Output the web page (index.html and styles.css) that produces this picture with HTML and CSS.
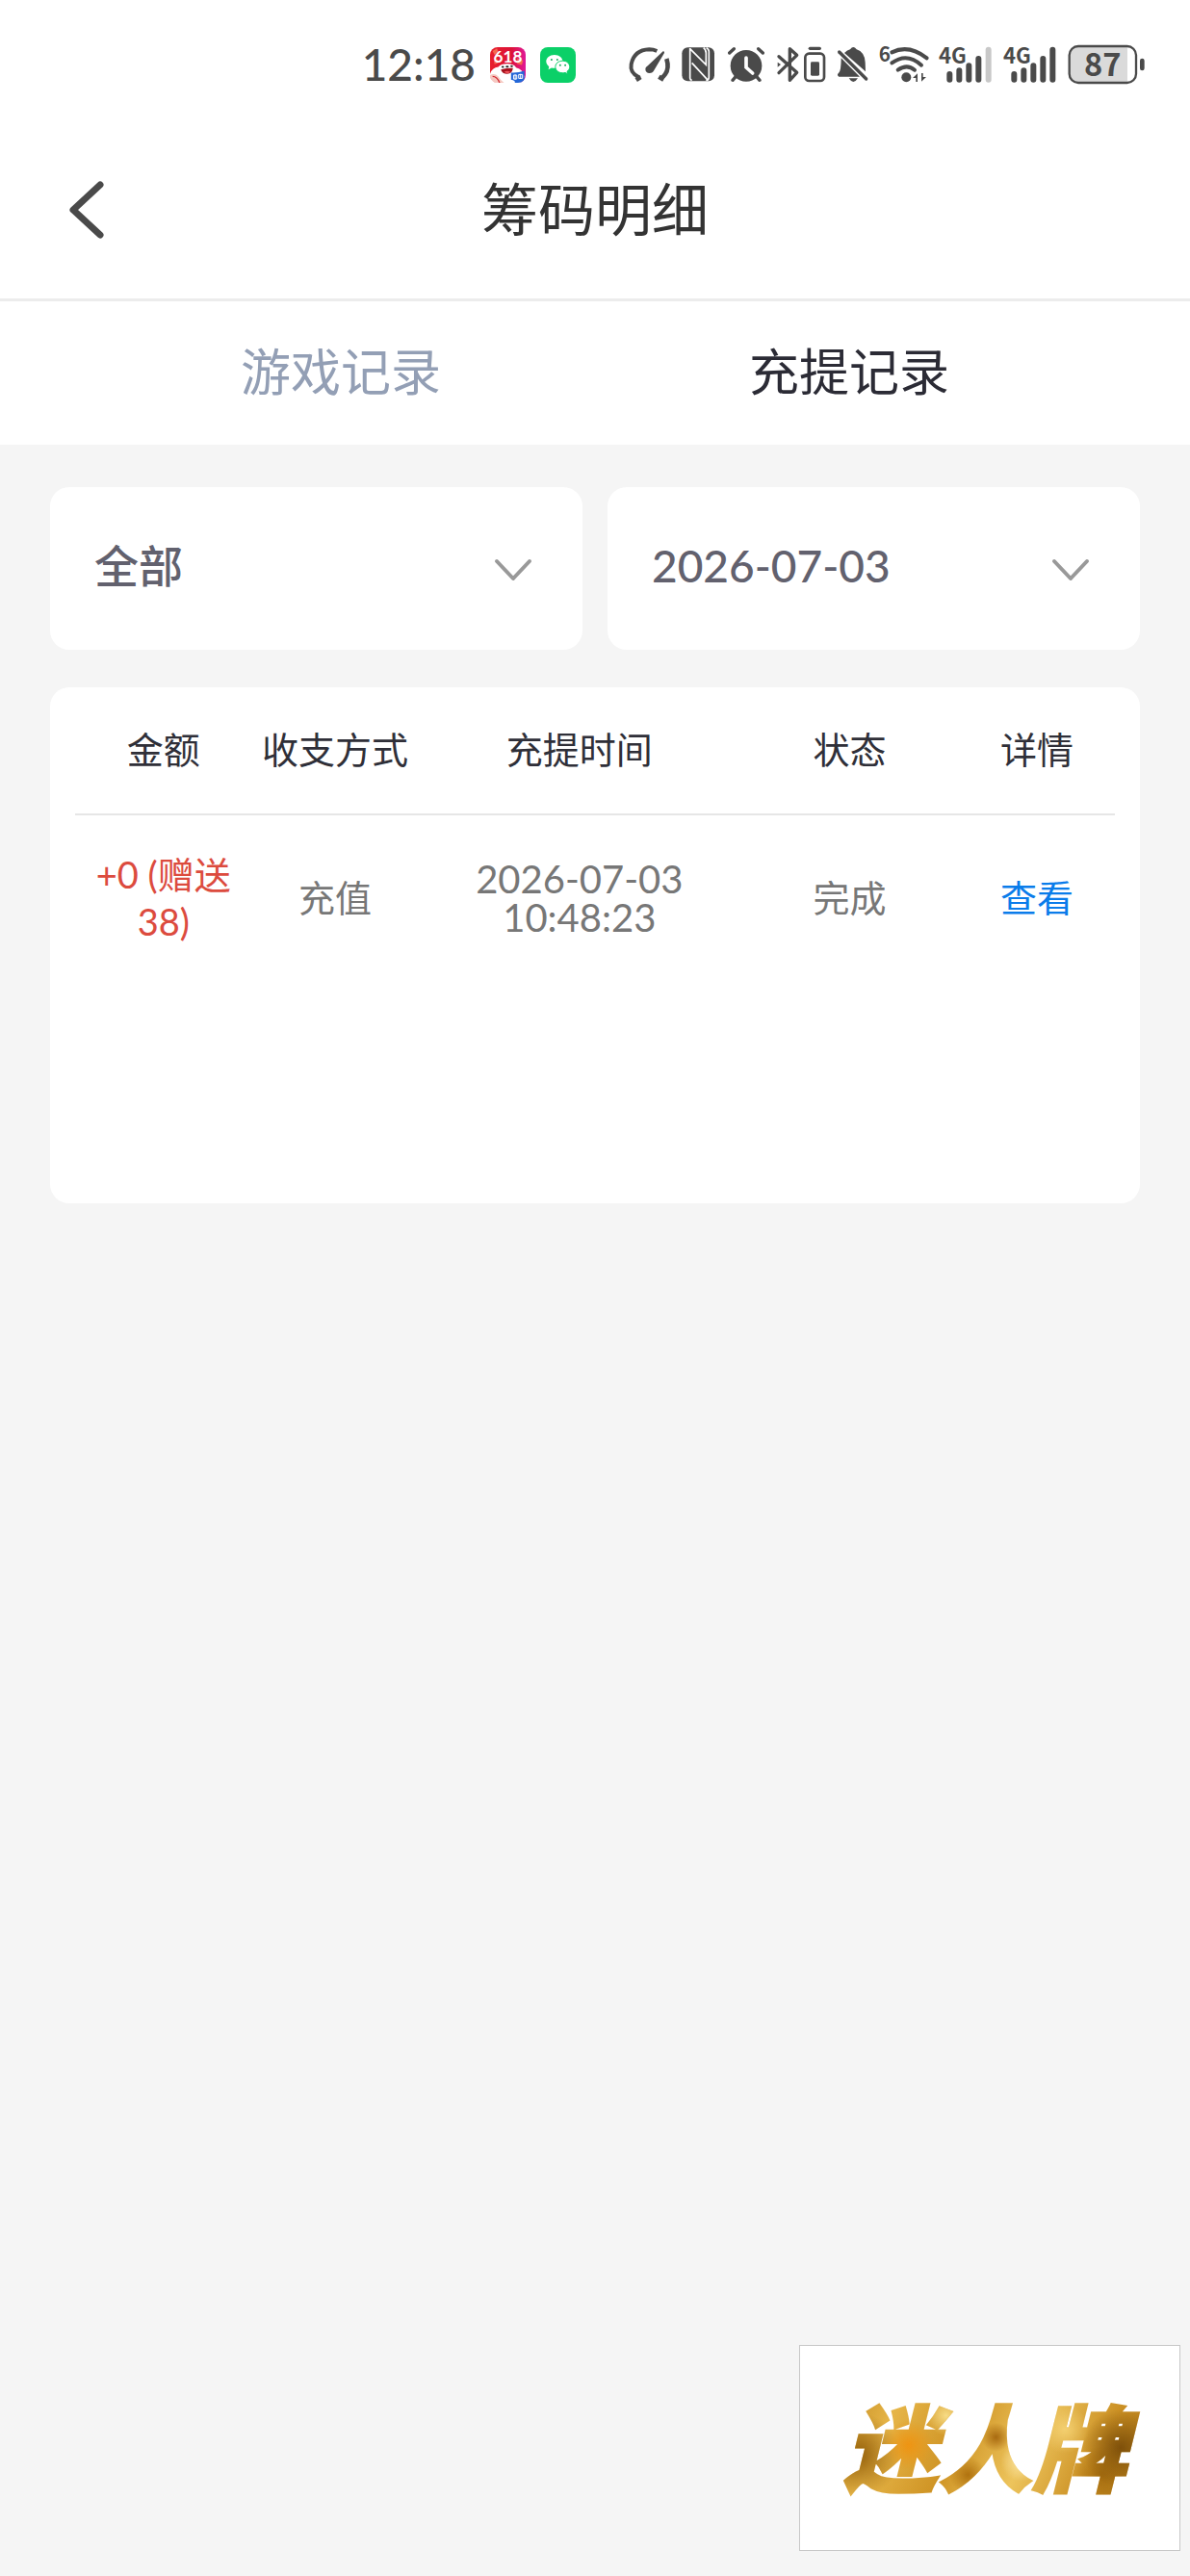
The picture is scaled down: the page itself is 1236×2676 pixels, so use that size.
FILE: index.html
```html
<!DOCTYPE html>
<html lang="zh-CN">
<head>
  <meta charset="UTF-8">
  <meta name="viewport" content="width=device-width, initial-scale=1.0">
  <title>筹码明细</title>
  <link rel="stylesheet" href="styles.css">
</head>
<body>
  <div class="status-bar">
    <div class="status-left">
      <span class="clock">12:18</span>
      <svg class="app-icon" viewBox="0 0 112 112" aria-hidden="true">
        <defs>
          <linearGradient id="promo" x1="0" y1="0" x2="1" y2="0">
            <stop offset="0" stop-color="#e8202c"/>
            <stop offset="0.6" stop-color="#dc1238"/>
            <stop offset="1" stop-color="#e01a9a"/>
          </linearGradient>
          <clipPath id="promoClip"><rect width="112" height="112" rx="24"/></clipPath>
        </defs>
        <g clip-path="url(#promoClip)">
          <rect width="112" height="112" fill="url(#promo)"/>
          <path d="M8 12l14-8 4 14-12 6zM86 34l18 8-4 14-16-4zM12 42l12-4 2 12-12 4z" fill="#f4694f"/>
          <path d="M0 84q6-20 26-22q8-10 28-10q22 0 28 12q22 6 26 28l-10 20H0z" fill="#fff"/>
          <path d="M0 88q14-8 26 4q6 10 18 20H0z" fill="#f6c9c1"/>
          <path d="M8 92q14 0 22 20" stroke="#d22b35" stroke-width="4" fill="none"/>
          <ellipse cx="40" cy="62" rx="4" ry="3" fill="#222"/>
          <ellipse cx="68" cy="60" rx="4" ry="3" fill="#222"/>
          <ellipse cx="54" cy="61" rx="5" ry="3" fill="#222"/>
          <path d="M34 70q20-5 38-4q-2 18-18 18q-16 0-20-14z" fill="#a5101c"/>
          <path d="M44 78q10-6 20 0q-9 8-20 0z" fill="#f0555c"/>
          <path d="M66 80q20 2 42-6v38H78q2-8-12-10z" fill="#2367d8"/>
          <path d="M74 88h10v12H74zM90 86h12v12H90zM79 86v16M96 84v16" fill="none" stroke="#fff" stroke-width="3"/>
        </g>
        <text x="56" y="48" text-anchor="middle" class="promo-text">618</text>
      </svg>
      <svg class="app-icon" viewBox="0 0 112 112" aria-hidden="true">
        <rect width="112" height="112" rx="24" fill="#0bd068"/>
        <path d="M45 24c-15 0-26 9-26 21 0 7 4 12 9 16l-2 9 10-5c3 1 6 1 9 1 15 0 26-9 26-21S60 24 45 24z" fill="#fff"/>
        <path d="M71 43c-13 0-23 8-23 19s10 19 23 19c3 0 5 0 8-1l8 4-2-8c5-3 8-8 8-14 0-11-9-19-22-19z" fill="#fff" stroke="#0bd068" stroke-width="3"/>
        <g fill="#10aa58">
          <circle cx="36" cy="39" r="3"/><circle cx="54" cy="39" r="3"/>
          <circle cx="63" cy="57" r="3"/><circle cx="79" cy="57" r="3"/>
        </g>
      </svg>
    </div>

    <div class="status-right">
      <!-- gauge -->
      <svg width="44" height="40" viewBox="33 52 132 120" aria-hidden="true">
        <path d="M66 159q4-8 4-8q-28-13-23-40q9-44 56-46q13 0 24 5" class="line w12 butt"/>
        <path d="M62 160l14-9M148 159l-15-9M157 94q9 30-4 48q-6 8-11 12" class="line w14 butt"/>
        <path d="M146 71q5-1 4 5l-32 54q-4 9-14 9q-13-1-13-13q0-6 9-12z" class="ink"/>
      </svg>
      <!-- nfc -->
      <svg width="36" height="40" viewBox="198 52 108 120" aria-hidden="true">
        <rect x="205" y="59" width="101" height="105" rx="18" class="ink"/>
        <path d="M230 61v94q0 5 6 6M230 63l50 50V76q0-10-8-16M286 161l-50-54M280 161q9 1 9-10V72q0-8-8-12" stroke="#fff" stroke-width="5" fill="none"/>
      </svg>
      <!-- alarm -->
      <svg width="40" height="40" viewBox="339 52 120 120" aria-hidden="true">
        <circle cx="405" cy="116" r="49" class="ink"/>
        <path d="M353 76l14-13M443 63l14 13M363 161l10-12M447 161l-10-12" class="line w10"/>
        <path d="M405 91v30l20 18" stroke="#fff" stroke-width="11" stroke-linecap="round" fill="none"/>
      </svg>
      <!-- bluetooth device battery -->
      <svg width="52" height="40" viewBox="492 52 156 120" aria-hidden="true">
        <path d="M507 87l56 50-22 24V63l22 20-56 55" class="line w10"/>
        <path d="M503 105l10 7-10 8z" class="ink"/>
        <rect x="589" y="78" width="59" height="85" rx="12" class="line w8"/>
        <rect x="606" y="104" width="27" height="43" rx="4" class="ink"/>
        <path d="M604 62h30" class="line w10"/>
      </svg>
      <!-- muted bell -->
      <svg width="34" height="40" viewBox="684 52 102 120" aria-hidden="true">
        <path d="M704 92l58 58h-65q-8-6-1-11q8-5 8-47zM714 76q9-9 18-11q10-14 20 0q25 8 27 40l1 29z" class="ink"/>
        <path d="M698 73l84 84" class="line w10"/>
        <path d="M728 155h28q-14 22-28 0z" class="ink"/>
      </svg>
      <!-- wifi 6 -->
      <svg width="52" height="40" viewBox="-24 52 156 120" aria-hidden="true">
        <text x="-22" y="103" class="wifi-text">6</text>
        <path d="M19 74q53-26 109 18" class="line w12"/>
        <path d="M19 107q47-34 92 7M38 129q28-20 52 0" class="line w12"/>
        <circle cx="64" cy="152" r="15" class="ink"/>
        <path d="M84 154l15-14v26h-5v-12zM126 151l-15 14v-26h5v12z" class="ink"/>
      </svg>
      <!-- signal, sim 1 -->
      <svg width="56" height="40" viewBox="165 52 168 120" aria-hidden="true">
        <text x="165" y="110" class="net-text">4G</text>
        <path d="M199 142v17M229 131v28M259 116v43M289 94v65" class="line w18"/>
        <path d="M320 66v93" class="line w18 faint"/>
      </svg>
      <!-- signal, sim 2 -->
      <svg width="56" height="40" viewBox="366 52 168 120" aria-hidden="true">
        <text x="366" y="110" class="net-text">4G</text>
        <path d="M400 142v17M430 131v28M460 116v43M490 94v65M520 66v93" class="line w18"/>
      </svg>
      <!-- phone battery -->
      <svg width="80" height="40" viewBox="567 52 240 120" aria-hidden="true">
        <path d="M600 56h153v112h-153q-26 0-26-26V82q0-26 26-26z" fill="#dadada"/>
        <rect x="572" y="55" width="208" height="114" rx="28" class="line w7"/>
        <path d="M799 100v24" class="line w14"/>
        <text x="676" y="149" text-anchor="middle" class="battery-text">87</text>
      </svg>
    </div>
  </div>

  <header class="header">
    <button class="back-btn" type="button" aria-label="返回">
      <svg width="36" height="60" viewBox="0 0 36 60">
        <path d="M32 4L4 30l28 26" fill="none" stroke="#4a4a4a" stroke-width="7" stroke-linecap="round" stroke-linejoin="round"/>
      </svg>
    </button>
    <h1>筹码明细</h1>
  </header>

  <nav class="tabs">
    <button type="button" class="tab">游戏记录</button>
    <button type="button" class="tab active">充提记录</button>
  </nav>

  <main class="content">
    <div class="filters">
      <div class="filter">
        <select aria-label="类型">
          <option>全部</option>
        </select>
        <svg class="chevron" width="40" height="24" viewBox="0 0 40 24"><path d="M3 3l17 18L37 3"/></svg>
      </div>
      <div class="filter">
        <select aria-label="日期">
          <option>2026-07-03</option>
        </select>
        <svg class="chevron" width="40" height="24" viewBox="0 0 40 24"><path d="M3 3l17 18L37 3"/></svg>
      </div>
    </div>

    <section class="records">
      <table>
        <colgroup>
          <col class="col-amount">
          <col class="col-type">
          <col class="col-time">
          <col class="col-state">
          <col class="col-detail">
        </colgroup>
        <thead>
          <tr>
            <th>金额</th>
            <th>收支方式</th>
            <th>充提时间</th>
            <th>状态</th>
            <th>详情</th>
          </tr>
        </thead>
        <tbody>
          <tr>
            <td class="amount">+0 (赠送38)</td>
            <td>充值</td>
            <td class="time">2026-07-03<br>10:48:23</td>
            <td>完成</td>
            <td><a href="#">查看</a></td>
          </tr>
        </tbody>
      </table>
    </section>
  </main>

  <div class="brand"><span>迷人牌</span></div>
</body>
</html>
```
FILE: styles.css
```css
* {
  box-sizing: border-box;
}
body {
  margin: 0;
  min-height: 100vh;
  background-color: #f5f5f5;
  color: #333;
  font-family: Lato, "Noto Sans CJK SC", sans-serif;
  font-size: 38px;
}
button,
select {
  font-family: inherit;
  border: none;
  background: none;
}
svg {
  overflow: visible;
}

/* status bar */
.status-bar {
  display: flex;
  justify-content: flex-end;
  align-items: center;
  gap: 53px;
  height: 134px;
  padding-right: 47px;
  background-color: #fff;
}
.status-left {
  display: flex;
  align-items: center;
  gap: 15px;
}
.status-right {
  display: flex;
  align-items: center;
  gap: 11px;
}
.clock {
  color: #4a4a4a;
  font-size: 46px;
  font-weight: 500;
  line-height: 48px;
}
.app-icon {
  width: 37px;
  height: 37px;
}
.ink {
  fill: #4a4a4a;
}
.line {
  fill: none;
  stroke: #4a4a4a;
  stroke-linecap: round;
  stroke-linejoin: round;
}
.w7 { stroke-width: 7px; }
.w8 { stroke-width: 8px; }
.w10 { stroke-width: 10px; }
.w12 { stroke-width: 12px; }
.w14 { stroke-width: 14px; }
.w18 { stroke-width: 18px; }
.butt {
  stroke-linecap: butt;
}
.faint {
  stroke: #c8c8c8;
}
.net-text,
.wifi-text,
.battery-text {
  fill: #4a4a4a;
  font-family: "Noto Sans CJK SC", sans-serif;
  font-weight: 700;
}
.net-text {
  font-size: 66px;
}
.wifi-text {
  font-size: 62px;
}
.battery-text {
  font-size: 98px;
}
.promo-text {
  fill: #fff;
  font-size: 52px;
  font-weight: 700;
}

/* header */
.header {
  display: grid;
  grid-template-columns: 108px 1fr 108px;
  align-items: center;
  height: 179px;
  padding-bottom: 8px;
  background-color: #fff;
  border-bottom: 3px solid #ececec;
}
.back-btn {
  display: flex;
  justify-content: flex-end;
  padding: 0;
  cursor: pointer;
}
.header h1 {
  margin: 0;
  text-align: center;
  font-size: 59px;
  font-weight: 400;
  line-height: 80px;
}

/* tabs */
.tabs {
  display: flex;
  padding: 0 90px;
  background-color: #fff;
}
.tab {
  flex: 1;
  height: 149px;
  padding: 0 0 8px;
  color: #939fb5;
  font-size: 52px;
  cursor: pointer;
}
.tab.active {
  color: #2b2b35;
}

.content {
  padding: 44px 52px;
}

/* filters */
.filters {
  display: grid;
  grid-template-columns: 1fr 1fr;
  gap: 26px;
  margin-bottom: 39px;
}
.filter {
  position: relative;
}
.filter select {
  display: block;
  width: 100%;
  height: 169px;
  padding: 0 110px 6px 46px;
  appearance: none;
  background-color: #fff;
  border-radius: 20px;
  color: #62616e;
  font-size: 46px;
  font-weight: 500;
}
.chevron {
  position: absolute;
  top: 74px;
  right: 52px;
  fill: none;
  stroke: #999;
  stroke-width: 4px;
  stroke-linecap: round;
  stroke-linejoin: round;
  pointer-events: none;
}

/* records */
.records {
  min-height: 536px;
  padding: 0 26px;
  background-color: #fff;
  border-radius: 20px;
}
table {
  width: 100%;
  table-layout: fixed;
  border-collapse: collapse;
}
.col-amount { width: 17%; }
.col-type { width: 16%; }
.col-time { width: 31%; }
.col-state { width: 21%; }
.col-detail { width: 15%; }
th {
  height: 132px;
  padding: 0 0 6px;
  border-bottom: 2px solid #e6e6e6;
  color: #2f2f38;
  font-weight: 400;
}
td {
  height: 176px;
  padding: 0 0 4px;
  color: #777;
  text-align: center;
  line-height: 49px;
}
td.amount {
  padding: 0 14px 4px;
  color: #dc4b3e;
}
td.time {
  font-size: 40px;
  line-height: 40px;
}
td a {
  color: #0a7cea;
  text-decoration: none;
}

/* floating brand card */
.brand {
  position: fixed;
  right: 10px;
  bottom: 26px;
  display: flex;
  justify-content: center;
  align-items: center;
  width: 396px;
  height: 214px;
  background-color: #fff;
  border: 1px solid #c8c8c8;
}
.brand span {
  padding: 0 20px 0 10px;
  background:
    radial-gradient(circle at 24% 48%, #ee9412, transparent 10%),
    radial-gradient(circle at 8% 55%, #96620c, transparent 14%),
    radial-gradient(circle at 36% 26%, #f7dc86, transparent 9%),
    radial-gradient(circle at 52% 42%, #a86a10, transparent 8%),
    radial-gradient(circle at 60% 60%, #fae3a0, transparent 10%),
    radial-gradient(circle at 43% 70%, #b0720f, transparent 9%),
    radial-gradient(circle at 74% 36%, #f3cf70, transparent 10%),
    radial-gradient(circle at 92% 50%, #7e500a, transparent 13%),
    radial-gradient(circle at 86% 70%, #a46c10, transparent 10%),
    linear-gradient(115deg, #bd8217, #e6b548 20%, #cf9425 40%, #edc45c 60%, #cb9024 80%, #9c680f);
  -webkit-background-clip: text;
  background-clip: text;
  color: transparent;
  -webkit-text-stroke: 2px transparent;
  font-size: 98px;
  font-style: italic;
  font-weight: 900;
  line-height: 140px;
}
```
